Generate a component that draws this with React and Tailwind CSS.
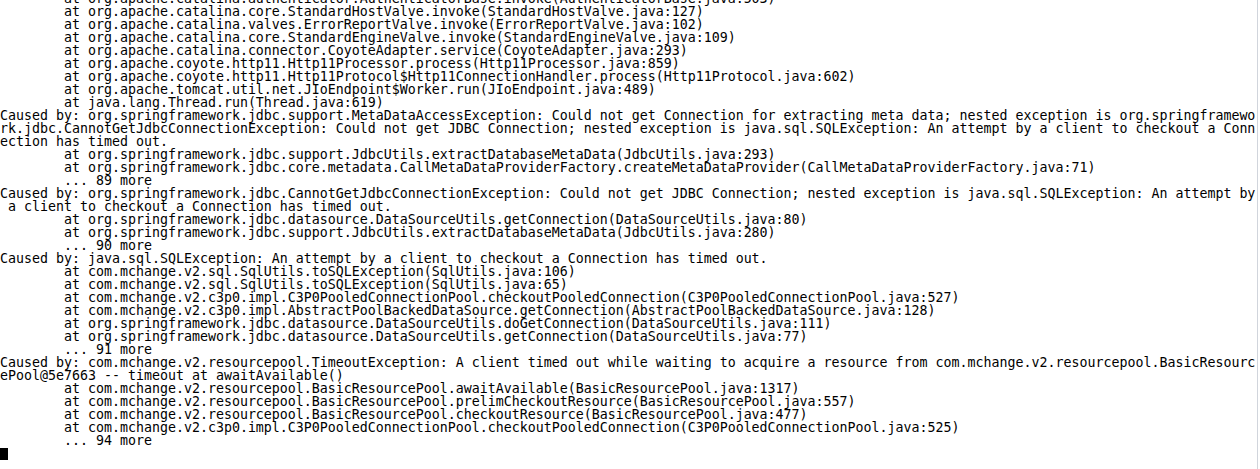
import React from 'react'

const T = '        '

const lines = [
  T + 'at org.apache.catalina.authenticator.AuthenticatorBase.invoke(AuthenticatorBase.java:503)',
  T + 'at org.apache.catalina.core.StandardHostValve.invoke(StandardHostValve.java:127)',
  T + 'at org.apache.catalina.valves.ErrorReportValve.invoke(ErrorReportValve.java:102)',
  T + 'at org.apache.catalina.core.StandardEngineValve.invoke(StandardEngineValve.java:109)',
  T + 'at org.apache.catalina.connector.CoyoteAdapter.service(CoyoteAdapter.java:293)',
  T + 'at org.apache.coyote.http11.Http11Processor.process(Http11Processor.java:859)',
  T + 'at org.apache.coyote.http11.Http11Protocol$Http11ConnectionHandler.process(Http11Protocol.java:602)',
  T + 'at org.apache.tomcat.util.net.JIoEndpoint$Worker.run(JIoEndpoint.java:489)',
  T + 'at java.lang.Thread.run(Thread.java:619)',
  'Caused by: org.springframework.jdbc.support.MetaDataAccessException: Could not get Connection for extracting meta data; nested exception is org.springframewo',
  'rk.jdbc.CannotGetJdbcConnectionException: Could not get JDBC Connection; nested exception is java.sql.SQLException: An attempt by a client to checkout a Conn',
  'ection has timed out.',
  T + 'at org.springframework.jdbc.support.JdbcUtils.extractDatabaseMetaData(JdbcUtils.java:293)',
  T + 'at org.springframework.jdbc.core.metadata.CallMetaDataProviderFactory.createMetaDataProvider(CallMetaDataProviderFactory.java:71)',
  T + '... 89 more',
  'Caused by: org.springframework.jdbc.CannotGetJdbcConnectionException: Could not get JDBC Connection; nested exception is java.sql.SQLException: An attempt by',
  ' a client to checkout a Connection has timed out.',
  T + 'at org.springframework.jdbc.datasource.DataSourceUtils.getConnection(DataSourceUtils.java:80)',
  T + 'at org.springframework.jdbc.support.JdbcUtils.extractDatabaseMetaData(JdbcUtils.java:280)',
  T + '... 90 more',
  'Caused by: java.sql.SQLException: An attempt by a client to checkout a Connection has timed out.',
  T + 'at com.mchange.v2.sql.SqlUtils.toSQLException(SqlUtils.java:106)',
  T + 'at com.mchange.v2.sql.SqlUtils.toSQLException(SqlUtils.java:65)',
  T + 'at com.mchange.v2.c3p0.impl.C3P0PooledConnectionPool.checkoutPooledConnection(C3P0PooledConnectionPool.java:527)',
  T + 'at com.mchange.v2.c3p0.impl.AbstractPoolBackedDataSource.getConnection(AbstractPoolBackedDataSource.java:128)',
  T + 'at org.springframework.jdbc.datasource.DataSourceUtils.doGetConnection(DataSourceUtils.java:111)',
  T + 'at org.springframework.jdbc.datasource.DataSourceUtils.getConnection(DataSourceUtils.java:77)',
  T + '... 91 more',
  'Caused by: com.mchange.v2.resourcepool.TimeoutException: A client timed out while waiting to acquire a resource from com.mchange.v2.resourcepool.BasicResourc',
  'ePool@5e7663 -- timeout at awaitAvailable()',
  T + 'at com.mchange.v2.resourcepool.BasicResourcePool.awaitAvailable(BasicResourcePool.java:1317)',
  T + 'at com.mchange.v2.resourcepool.BasicResourcePool.prelimCheckoutResource(BasicResourcePool.java:557)',
  T + 'at com.mchange.v2.resourcepool.BasicResourcePool.checkoutResource(BasicResourcePool.java:477)',
  T + 'at com.mchange.v2.c3p0.impl.C3P0PooledConnectionPool.checkoutPooledConnection(C3P0PooledConnectionPool.java:525)',
  T + '... 94 more',
]

export default function App() {
  return (
    <div className="w-[1260px] h-[469px] bg-white flex overflow-hidden">
      <div className="flex-1 overflow-hidden">
        {/* console is scrolled: first line is half hidden above the top */}
        <div
          className="-mt-[8px] text-[13.29px] leading-[13px] text-black whitespace-pre"
          style={{ fontFamily: '"DejaVu Sans Mono", "Liberation Mono", monospace' }}
        >
          {lines.map((l, i) => (
            <div key={i} className="h-[13px]">{l}</div>
          ))}
          <div className="h-[13px] flex items-center">
            <div className="w-[8px] h-[12px] bg-black" />
          </div>
        </div>
      </div>
      <div className="w-[3px] border-l border-gray-300 bg-white" />
    </div>
  )
}
